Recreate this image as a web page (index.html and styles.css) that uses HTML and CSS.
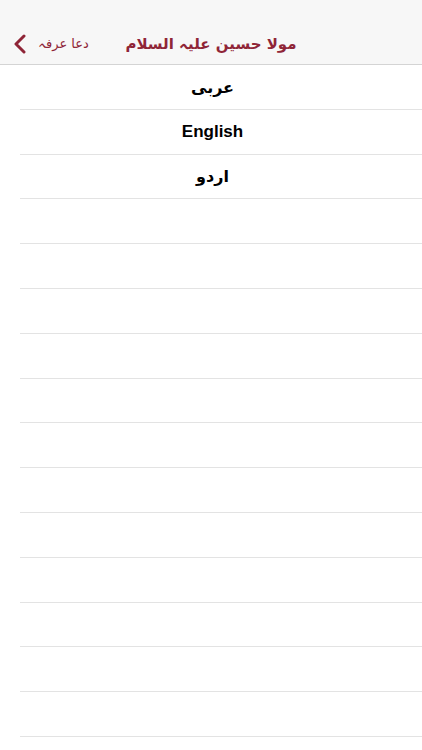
FILE: index.html
```html
<!DOCTYPE html>
<html lang="ur">
<head>
    <meta charset="UTF-8">
    <meta name="viewport" content="width=device-width, initial-scale=1.0">
    <title>مولا حسین علیہ السلام</title>
    <link rel="stylesheet" href="styles.css">
</head>
<body>
    <header class="nav-bar">
        <a class="nav-back" href="#">
            <svg class="chevron" width="13" height="20" viewBox="0 0 13 20">
                <path d="M11 2 L3 10 L11 18" fill="none" stroke="currentColor" stroke-width="3" stroke-linecap="round" stroke-linejoin="round"/>
            </svg>
            <span class="back-label">دعا عرفہ</span>
        </a>
        <h1 class="nav-title">مولا حسین علیہ السلام</h1>
    </header>

    <ul class="lang-list">
        <li class="lang-row">عربی</li>
        <li class="lang-row latin">English</li>
        <li class="lang-row">اردو</li>
        <li class="lang-row"></li>
        <li class="lang-row"></li>
        <li class="lang-row"></li>
        <li class="lang-row"></li>
        <li class="lang-row"></li>
        <li class="lang-row"></li>
        <li class="lang-row"></li>
        <li class="lang-row"></li>
        <li class="lang-row"></li>
        <li class="lang-row"></li>
        <li class="lang-row"></li>
        <li class="lang-row"></li>
    </ul>
</body>
</html>
```

FILE: styles.css
```css
/* Base */
body, html {
    margin: 0;
    padding: 0;
    background-color: #ffffff;
    font-family: "DejaVu Sans", "Liberation Sans", sans-serif;
    overflow: hidden;
}

/* Barre de navigation */
.nav-bar {
    position: relative;
    height: 64px;
    background-color: #f7f7f7;
    border-bottom: 1px solid #d4d4d4;
    box-sizing: content-box;
}

.nav-back {
    position: absolute;
    left: 13px;
    top: 34px;
    display: flex;
    align-items: center;
    gap: 12px;
    color: #8f2537;
    text-decoration: none;
}

.chevron {
    display: block;
}

.back-label {
    font-size: 13px;
    line-height: 20px;
}

.nav-title {
    margin: 0;
    padding-top: 33px;
    text-align: center;
    font-size: 15px;
    line-height: 22px;
    font-weight: bold;
    color: #8f2537;
}

/* Liste des langues */
.lang-list {
    list-style: none;
    margin: 0;
    padding: 0;
}

.lang-row {
    position: relative;
    height: 44.8px;
    padding-left: 3px;
    box-sizing: border-box;
    display: flex;
    align-items: center;
    justify-content: center;
    font-size: 16px;
    font-weight: bold;
    color: #000000;
}

.lang-row.latin {
    font-family: "Liberation Sans", Arial, sans-serif;
    font-size: 17px;
}

.lang-row::after {
    content: "";
    position: absolute;
    left: 20px;
    right: 0;
    bottom: 0;
    height: 1px;
    background-color: #e3e3e3;
}
```
